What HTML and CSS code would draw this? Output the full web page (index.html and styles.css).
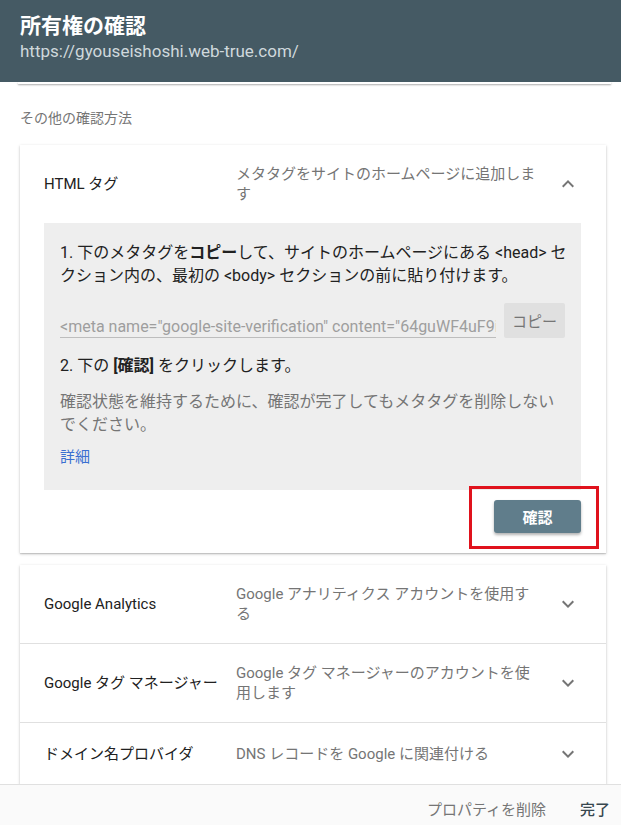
FILE: index.html
```html
<!DOCTYPE html>
<html lang="ja">
<head>
    <meta charset="UTF-8">
    <title>所有権の確認</title>
    <meta name="viewport" content="width=621, initial-scale=1.0">
    <link rel="stylesheet" href="styles.css">
</head>
<body>
    <div class="page">
        <div class="dialog-head">
            <div class="dialog-title">所有権の確認</div>
            <div class="dialog-url">https://gyouseishoshi.web-true.com/</div>
        </div>

        <div class="dialog-body">
            <div class="scroll-edge"></div>
            <div class="section-label">その他の確認方法</div>

            <div class="card">
                <div class="method-row">
                    <div class="method-name">HTML タグ</div>
                    <div class="method-desc">メタタグをサイトのホームページに追加します</div>
                    <svg class="chevron" viewBox="0 0 24 24" width="24" height="24"><path d="M7.41 15.41L12 10.83l4.59 4.58L18 14l-6-6-6 6z"/></svg>
                </div>
                <div class="method-detail">
                    <div class="steps">
                        <p class="step">1. 下のメタタグを<b>コピー</b>して、サイトのホームページにある &lt;head&gt; セクション内の、最初の &lt;body&gt; セクションの前に貼り付けます。</p>
                        <div class="copy-row">
                            <input class="meta-input" type="text" readonly value='<meta name="google-site-verification" content="64guWF4uF9iQ2xS" />'>
                            <button class="btn-copy">コピー</button>
                        </div>
                        <p class="step">2. 下の <b>[確認]</b> をクリックします。</p>
                        <p class="note">確認状態を維持するために、確認が完了してもメタタグを削除しないでください。</p>
                        <a class="more-link">詳細</a>
                    </div>
                    <div class="actions">
                        <span class="highlight">
                            <button class="btn-verify">確認</button>
                        </span>
                    </div>
                </div>
            </div>

            <div class="card">
                <div class="method-row">
                    <div class="method-name">Google Analytics</div>
                    <div class="method-desc">Google アナリティクス アカウントを使用する</div>
                    <svg class="chevron" viewBox="0 0 24 24" width="24" height="24"><path d="M16.59 8.59L12 13.17 7.41 8.59 6 10l6 6 6-6z"/></svg>
                </div>
                <div class="method-row">
                    <div class="method-name">Google タグ マネージャー</div>
                    <div class="method-desc">Google タグ マネージャーのアカウントを使用します</div>
                    <svg class="chevron" viewBox="0 0 24 24" width="24" height="24"><path d="M16.59 8.59L12 13.17 7.41 8.59 6 10l6 6 6-6z"/></svg>
                </div>
                <div class="method-row">
                    <div class="method-name">ドメイン名プロバイダ</div>
                    <div class="method-desc">DNS レコードを Google に関連付ける</div>
                    <svg class="chevron" viewBox="0 0 24 24" width="24" height="24"><path d="M16.59 8.59L12 13.17 7.41 8.59 6 10l6 6 6-6z"/></svg>
                </div>
            </div>
        </div>

        <div class="dialog-foot">
            <button class="btn-flat">プロパティを削除</button>
            <button class="btn-flat btn-done">完了</button>
        </div>
    </div>
</body>
</html>
```

FILE: styles.css
```css
body {
    margin: 0;
    font-family: Roboto, "Noto Sans CJK JP", sans-serif;
    background: #fff;
    color: #212121;
}
.page {
    height: 100vh;
    display: flex;
    flex-direction: column;
    overflow: hidden;
}
/* ヘッダー */
.dialog-head {
    background: #455a64;
    height: 82px;
    box-sizing: border-box;
    padding: 13px 20px 0 20px;
    flex-shrink: 0;
}
.dialog-title {
    color: #fff;
    font-size: 21px;
    font-weight: bold;
    line-height: 27px;
}
.dialog-url {
    color: #cfd8dc;
    font-size: 17px;
    line-height: 23px;
}
/* 本文 */
.dialog-body {
    flex: 1;
    overflow: hidden;
    padding: 0 15px 0 20px;
}
.scroll-edge {
    height: 2px;
    margin: 0 -5px 0 -2px;
    background: #fff;
    box-shadow: 0 1px 2px rgba(0,0,0,0.35);
}
.section-label {
    color: #757575;
    font-size: 14px;
    line-height: 20px;
    margin: 24px 0 17px 0;
}
.card {
    background: #fff;
    box-shadow: 0 1px 3px rgba(0,0,0,0.2), 0 1px 1px rgba(0,0,0,0.12);
    margin-bottom: 12px;
}
.method-row {
    display: grid;
    grid-template-columns: 176px 304px 24px;
    column-gap: 16px;
    align-items: center;
    padding: 19px 25px 19px 24px;
}
.method-row + .method-row {
    border-top: 1px solid #e0e0e0;
}
.method-name {
    font-size: 15px;
    line-height: 20px;
    white-space: nowrap;
}
.method-desc {
    font-size: 15px;
    line-height: 20px;
    color: #757575;
}
.chevron {
    fill: #757575;
}
/* 展開部分 */
.method-detail {
    padding: 0 25px 4px 24px;
}
.steps {
    background: #eeeeee;
    padding: 18px 13px 23px 16px;
}
.step {
    margin: 0;
    font-size: 16px;
    line-height: 23px;
}
.copy-row {
    display: flex;
    align-items: stretch;
    gap: 8px;
    margin: 16px 3px 16px 0;
}
.meta-input {
    flex: 1;
    min-width: 0;
    border: none;
    border-bottom: 1px solid #bdbdbd;
    background: transparent;
    font-family: Roboto, "Noto Sans CJK JP", sans-serif;
    font-size: 16px;
    color: #9e9e9e;
    padding: 12px 0 0 0;
    outline: none;
}
.btn-copy {
    background: #e0e0e0;
    border: none;
    border-radius: 2px;
    color: #757575;
    font-family: Roboto, "Noto Sans CJK JP", sans-serif;
    font-size: 15px;
    height: 35px;
    padding: 0 8px;
}
.note {
    margin: 13px 3px 0 0;
    font-size: 16px;
    line-height: 23px;
    color: #757575;
}
.more-link {
    display: inline-block;
    margin-top: 11px;
    font-size: 15px;
    line-height: 20px;
    color: #3b6fd1;
    cursor: pointer;
}
.actions {
    display: flex;
    justify-content: flex-end;
    margin: -4px -18px 0 0;
}
.highlight {
    display: inline-block;
    border: 3px solid #e0121c;
    padding: 11px 15px 13px 22px;
}
.btn-verify {
    display: block;
    width: 87px;
    height: 33px;
    background: #607d8b;
    color: #fff;
    border: none;
    border-radius: 3px;
    font-family: Roboto, "Noto Sans CJK JP", sans-serif;
    font-size: 15px;
    font-weight: bold;
    box-shadow: 0 2px 3px rgba(0,0,0,0.3);
}
/* フッター */
.dialog-foot {
    flex-shrink: 0;
    height: 41px;
    border-top: 1px solid #e0e0e0;
    background: #fafafa;
    display: flex;
    justify-content: flex-end;
    align-items: flex-start;
    gap: 18px;
    padding: 15px 3px 0 0;
    box-sizing: border-box;
}
.btn-flat {
    background: none;
    border: none;
    padding: 0 8px;
    font-family: Roboto, "Noto Sans CJK JP", sans-serif;
    font-size: 15px;
    line-height: 20px;
    color: #757575;
}
.btn-done {
    color: #37474f;
    font-weight: 500;
}
```
